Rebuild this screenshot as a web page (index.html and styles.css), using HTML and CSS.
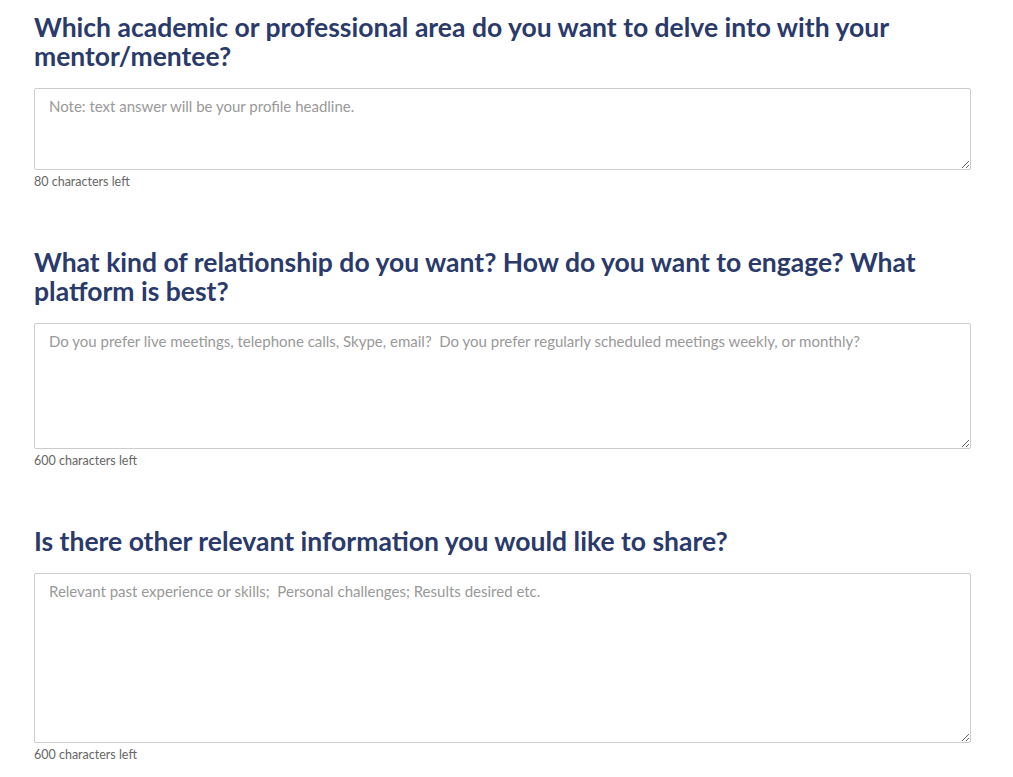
FILE: index.html
```html
<!doctype html>
<html lang="en">
<head>
  <meta charset="utf-8">
  <title>Mentor profile</title>
  <link rel="stylesheet" href="styles.css">
</head>
<body>
  <div class="form">
    <div class="question">
      <h2 class="question-title">Which academic or professional area do you want to delve into with your mentor/mentee?</h2>
      <textarea class="answer answer-short" placeholder="Note: text answer will be your profile headline."></textarea>
      <div class="chars-left">80 characters left</div>
    </div>
    <div class="question">
      <h2 class="question-title">What kind of relationship do you want? How do you want to engage? What platform is best?</h2>
      <textarea class="answer answer-mid" placeholder="Do you prefer live meetings, telephone calls, Skype, email?  Do you prefer regularly scheduled meetings weekly, or monthly?"></textarea>
      <div class="chars-left">600 characters left</div>
    </div>
    <div class="question">
      <h2 class="question-title">Is there other relevant information you would like to share?</h2>
      <textarea class="answer answer-tall" placeholder="Relevant past experience or skills;  Personal challenges; Results desired etc."></textarea>
      <div class="chars-left">600 characters left</div>
    </div>
  </div>
</body>
</html>
```

FILE: styles.css
```css
body {
  margin: 0;
  background: #ffffff;
  font-family: "Lato", "Open Sans", sans-serif;
}
.form {
  width: 937px;
  padding: 13px 0 0 34px;
}
.question {
  margin-bottom: 58px;
}
.question:last-child {
  margin-bottom: 0;
}
.question-title {
  margin: 0 0 17px 0;
  font-size: 26.5px;
  line-height: 29px;
  font-weight: bold;
  color: #2a3a6b;
}
.answer {
  display: block;
  box-sizing: border-box;
  width: 100%;
  margin: 0;
  padding: 7px 14px;
  border: 1px solid #cccccc;
  border-radius: 2px;
  font-family: "Lato", "Open Sans", sans-serif;
  font-size: 15px;
  line-height: 20px;
  color: #333333;
}
.answer::placeholder {
  color: #999999;
}
.answer-short { height: 82px; }
.answer-mid { height: 126px; }
.answer-tall { height: 170px; }
.chars-left {
  margin-top: 4px;
  font-size: 12.5px;
  line-height: 16px;
  color: #666666;
}
```
